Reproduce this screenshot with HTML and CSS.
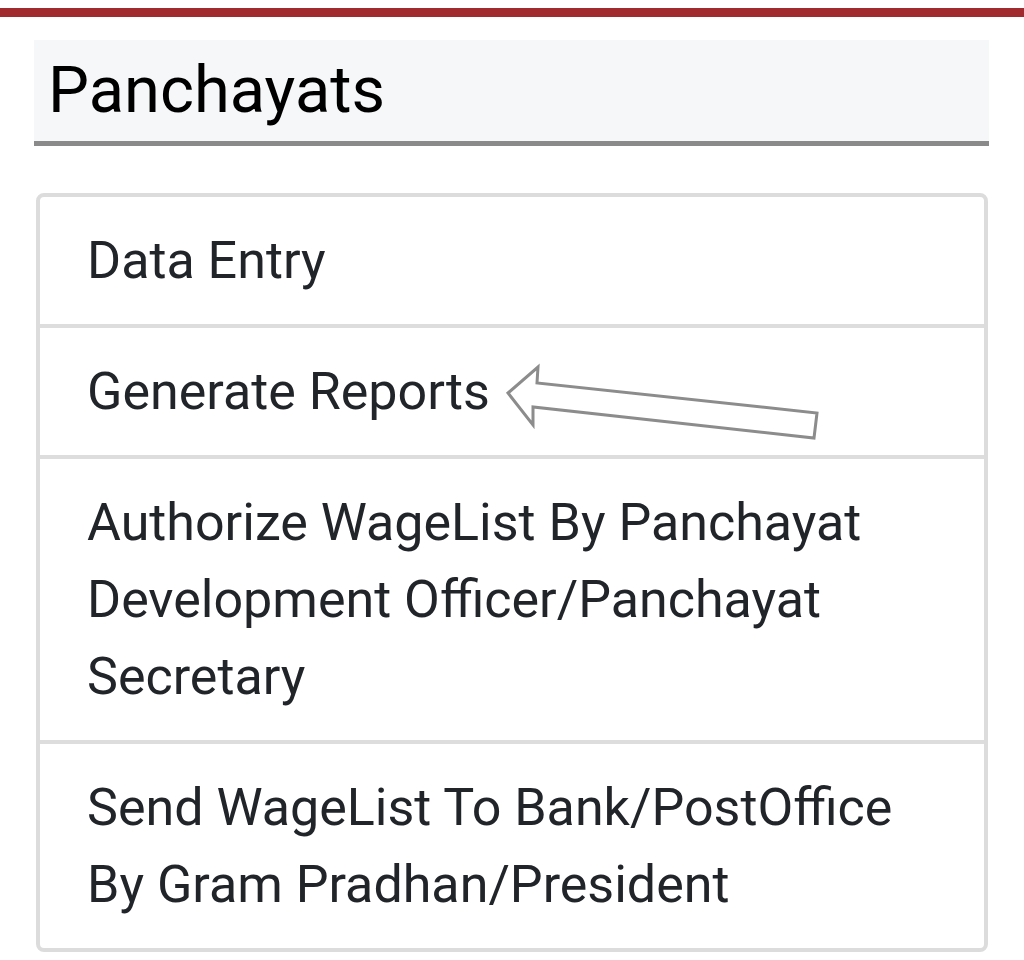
FILE: index.html
```html
<!DOCTYPE html>
<html>
<head>
<meta charset="utf-8">
<link rel="stylesheet" href="styles.css">
</head>
<body>
<div class="topbar"></div>
<div class="container">
  <div class="heading">Panchayats</div>
  <div class="list">
    <div class="item">Data Entry</div>
    <div class="item">Generate Reports</div>
    <div class="item">Authorize WageList By Panchayat Development Officer/Panchayat Secretary</div>
    <div class="item">Send WageList To Bank/PostOffice By Gram Pradhan/President</div>
  </div>
</div>
<svg class="arrow" width="1024" height="960" viewBox="0 0 1024 960">
  <polygon points="508,393 538,367 537,383 817,413 814,438 533,407 533,425" fill="none" stroke="#8c8c8c" stroke-width="3" stroke-linejoin="miter"/>
</svg>
</body>
</html>
```
FILE: styles.css
```css
html, body {
  margin: 0;
  padding: 0;
  background: #ffffff;
}
body {
  position: relative;
  width: 1024px;
  height: 960px;
  overflow: hidden;
  font-family: Roboto, "Liberation Sans", sans-serif;
}
.topbar {
  margin-top: 8px;
  height: 9px;
  background: #a12a2e;
}
.container {
  padding: 0 35px 0 34px;
}
.heading {
  margin-top: 23px;
  height: 106px;
  box-sizing: border-box;
  padding-left: 14px;
  background: #f6f7f9;
  border-bottom: 5px solid #8a8a8a;
  font-size: 65px;
  line-height: 100px;
  color: #000000;
}
.list {
  margin: 47px 1px 0 2px;
  border: 4px solid #dcdcdc;
  border-radius: 8px;
  background: #ffffff;
}
.item {
  padding: 25px 40px 25px 47px;
  font-size: 52px;
  line-height: 77px;
  color: #212529;
  border-top: 4px solid #dddddd;
}
.item:first-child {
  border-top: none;
  padding-top: 25px;
}
.arrow {
  position: absolute;
  left: 0;
  top: 0;
  pointer-events: none;
}
```
